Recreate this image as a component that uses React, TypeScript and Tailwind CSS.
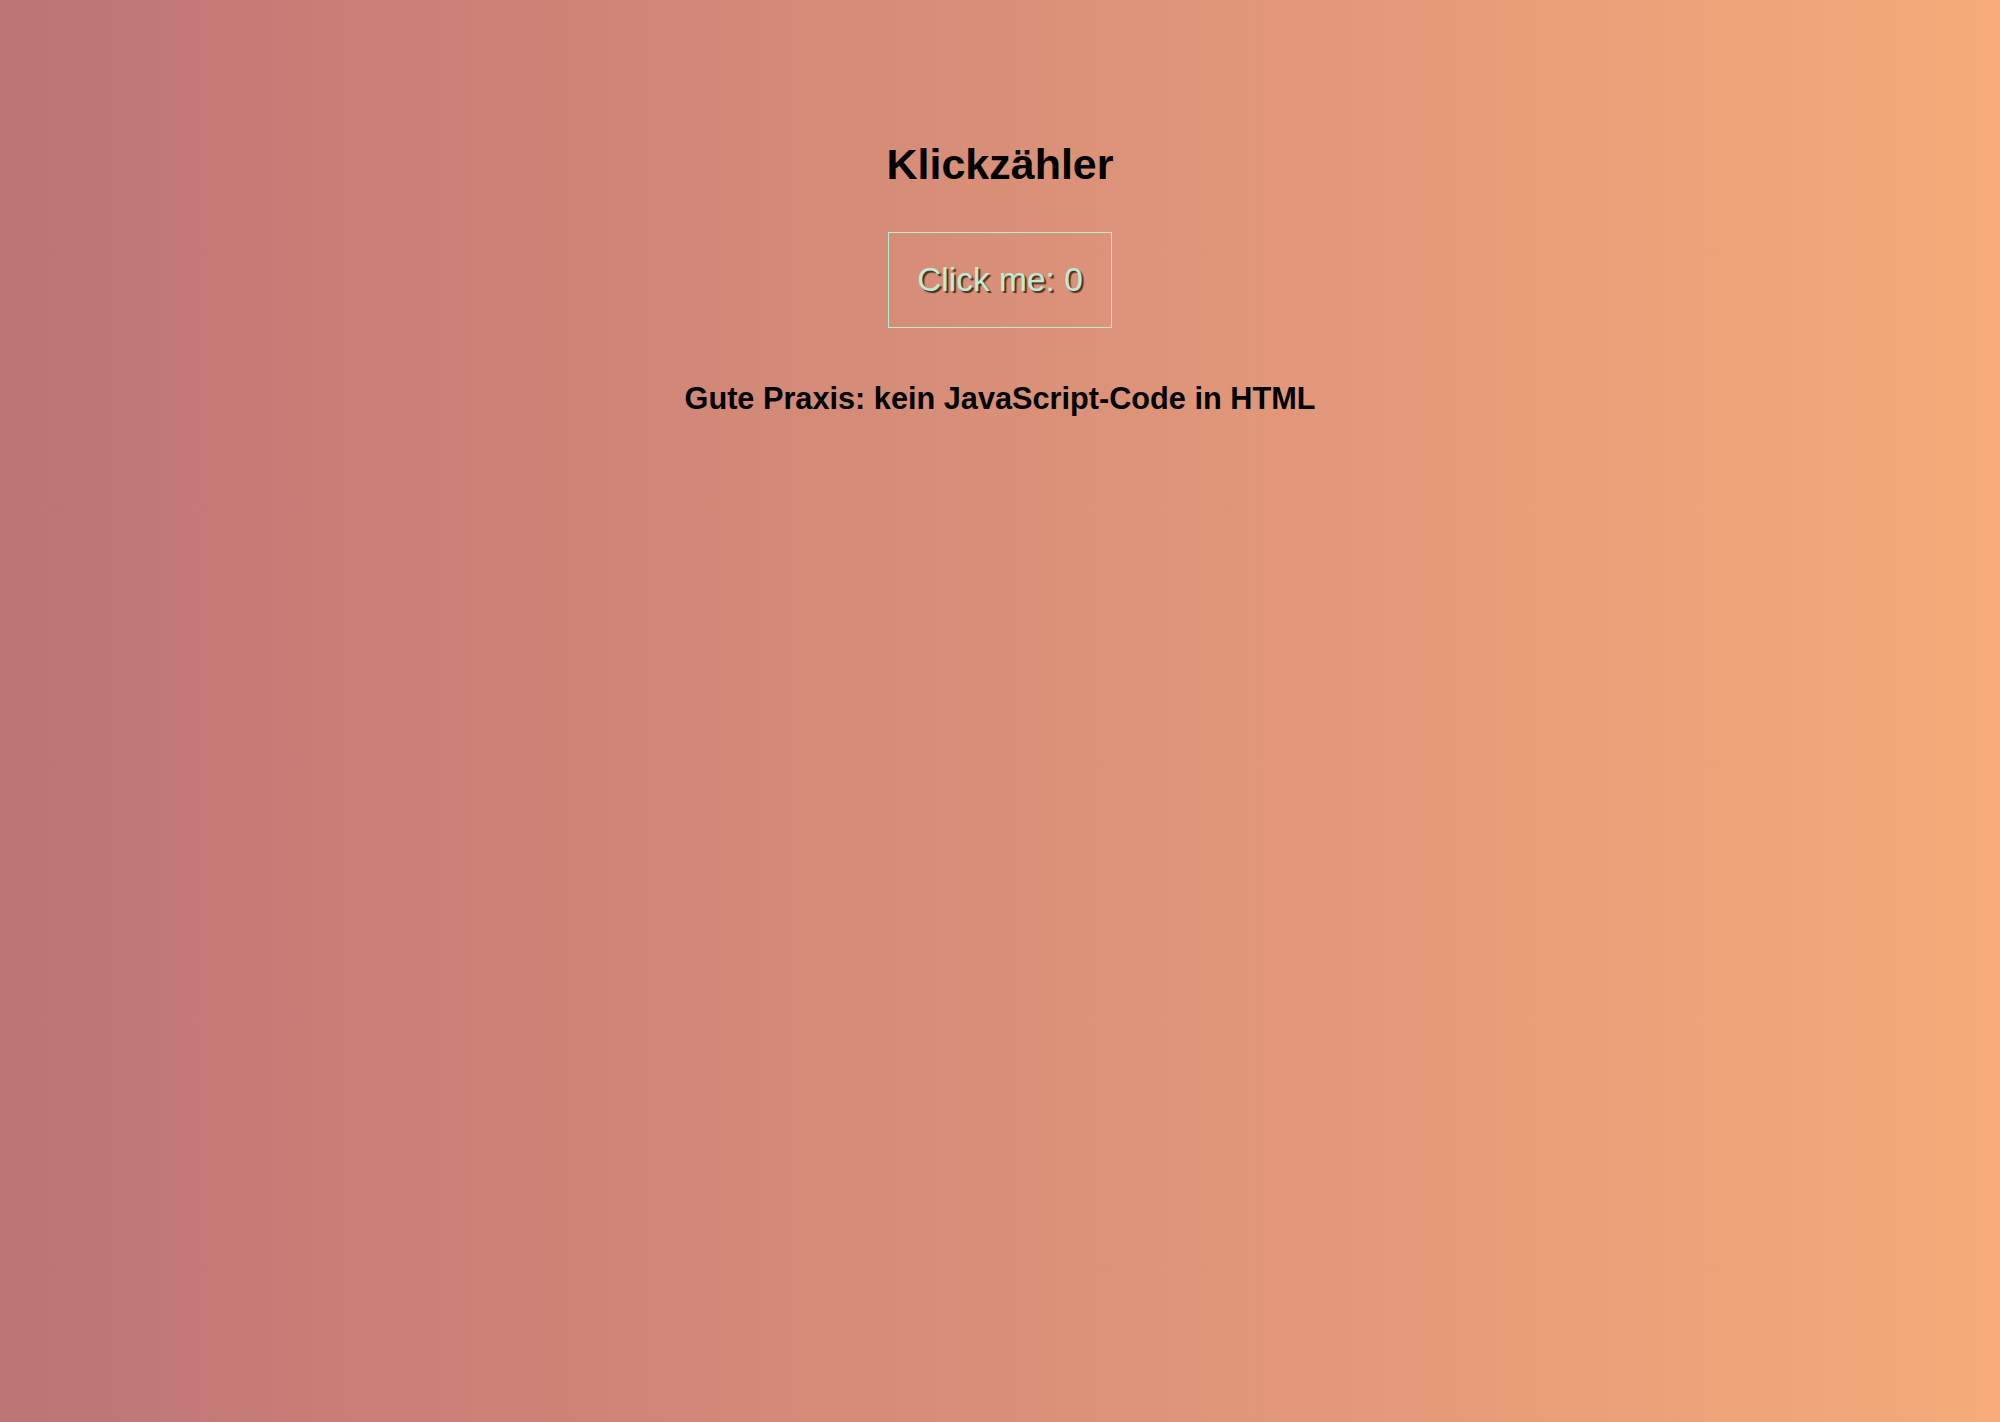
import { useState } from "react";

export default function App() {
  const [count, setCount] = useState(0);

  return (
    <div className="flex min-h-screen w-full flex-col items-center bg-gradient-to-r from-[#bd7575] to-[#f6ab79] pt-[143px] font-['Liberation_Sans',Arial,sans-serif] text-black">
      <h1 className="text-[43px] font-bold leading-none">Klickzähler</h1>
      <button
        className="mt-[46px] border border-[#b4ecd4] px-[28px] py-[30px] text-[33.5px] leading-none text-[#bdebd3] [text-shadow:2px_2px_1px_rgba(30,15,10,0.75)]"
        onClick={() => setCount(count + 1)}
      >
        Click me: {count}
      </button>
      <h2 className="mt-[56px] text-[30.7px] font-bold leading-none">
        Gute Praxis: kein JavaScript-Code in HTML
      </h2>
    </div>
  );
}
